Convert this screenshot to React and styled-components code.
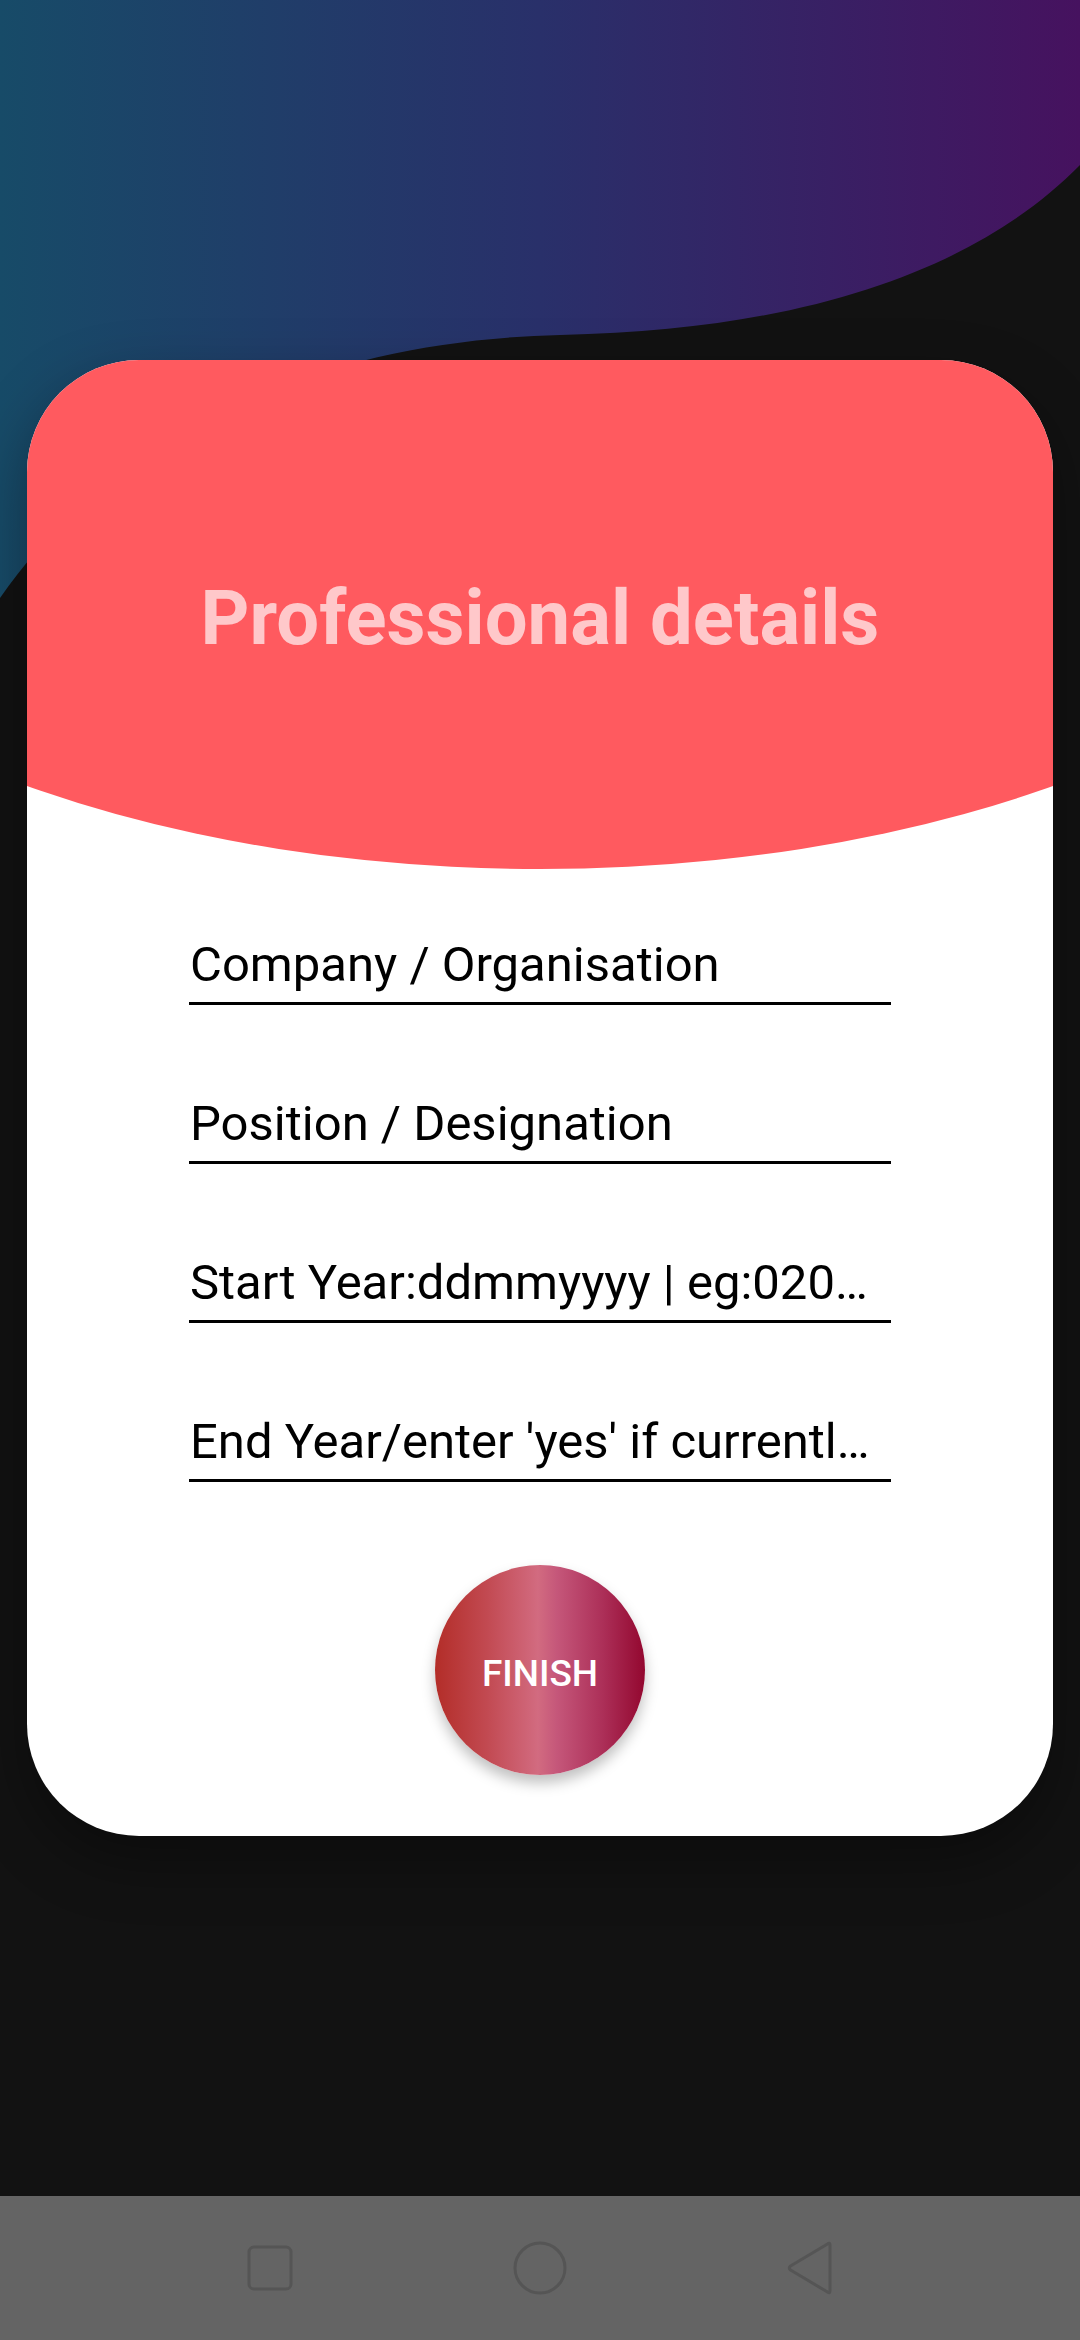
import React from 'react'
import styled, { createGlobalStyle } from 'styled-components'

const GlobalStyle = createGlobalStyle`
  html, body {
    margin: 0;
    padding: 0;
    background: #121212;
  }
  body {
    font-family: Roboto, "Noto Sans", sans-serif;
  }
  * {
    box-sizing: border-box;
  }
`

const fields = [
  'Company / Organisation',
  'Position / Designation',
  'Start Year:ddmmyyyy | eg:02072019',
  "End Year/enter 'yes' if currently working here",
]

function TopWave() {
  return (
    <Wave viewBox="0 0 1080 620" width="1080" height="620">
      <defs>
        <linearGradient id="waveFill" x1="0" y1="0" x2="1" y2="0">
          <stop offset="0" stopColor="#174b68" />
          <stop offset="0.5" stopColor="#29306a" />
          <stop offset="1" stopColor="#46125f" />
        </linearGradient>
      </defs>
      <path
        d="M0 0 H1080 V165 C985 262 820 330 560 335 C330 340 120 425 0 598 Z"
        fill="url(#waveFill)"
      />
    </Wave>
  )
}

function NavIcon({ kind }) {
  return (
    <svg width="60" height="60" viewBox="0 0 60 60" fill="none" stroke="#555" strokeWidth="3">
      {kind === 'square' && <rect x="9" y="9" width="42" height="42" rx="5" />}
      {kind === 'circle' && <circle cx="30" cy="30" r="25" />}
      {kind === 'back' && (
        <path d="M50 7 V53 Q50 56 47.5 54 L10.5 32 Q8 30 10.5 28 L47.5 6 Q50 4 50 7 Z" strokeLinejoin="round" />
      )}
    </svg>
  )
}

function App() {
  return (
    <>
      <GlobalStyle />
      <Screen>
        <TopWave />
        <Main>
          <Card>
            <Header>
              <Title>Professional details</Title>
            </Header>
            <Form>
              {fields.map((f) => (
                <Field key={f} placeholder={f} />
              ))}
              <FinishButton>FINISH</FinishButton>
            </Form>
          </Card>
        </Main>
        <NavBar>
          <NavSlot><NavIcon kind="square" /></NavSlot>
          <NavSlot><NavIcon kind="circle" /></NavSlot>
          <NavSlot><NavIcon kind="back" /></NavSlot>
        </NavBar>
      </Screen>
    </>
  )
}

export default App

const Screen = styled.div`
  position: relative;
  width: 1080px;
  height: 2340px;
  display: flex;
  flex-direction: column;
  background: #121212;
  overflow: hidden;
`

const Wave = styled.svg`
  position: absolute;
  top: 0;
  left: 0;
  display: block;
`

const Main = styled.main`
  position: relative;
  flex: 1;
  padding: 360px 27px 0;
`

const Card = styled.section`
  height: 1476px;
  background: #fff;
  border-radius: 112px;
  overflow: hidden;
  box-shadow: 0 24px 60px rgba(0, 0, 0, 0.35);
  display: flex;
  flex-direction: column;
`

const Header = styled.header`
  height: 509px;
  flex-shrink: 0;
  background: #ff5a5f;
  clip-path: ellipse(900px 465.5px at 50% 43.5px);
  display: flex;
  align-items: center;
  justify-content: center;
  padding-top: 8px;
`

const Title = styled.h1`
  margin: 0;
  font-family: Roboto, sans-serif;
  font-weight: 700;
  font-size: 76px;
  line-height: 1.172;
  color: #ffc8ca;
`

const Form = styled.form`
  width: 702px;
  margin: 0 auto;
  padding: 66px 0 61px;
  display: flex;
  flex-direction: column;
  align-items: stretch;
  gap: 89px;
`

const Field = styled.input`
  display: block;
  width: 100%;
  height: 70px;
  margin: 0;
  padding: 0 0 9px 1px;
  border: none;
  border-bottom: 3px solid #000;
  background: transparent;
  outline: none;
  font-family: Roboto, sans-serif;
  font-size: 49px;
  line-height: 58px;
  color: #000;
  text-overflow: ellipsis;
  white-space: nowrap;
  overflow: hidden;

  &::placeholder {
    color: #000;
    opacity: 1;
    text-overflow: ellipsis;
  }
`

const FinishButton = styled.button`
  align-self: center;
  margin-top: -6px;
  width: 210px;
  height: 210px;
  padding: 6px 0 0;
  border: none;
  border-radius: 50%;
  background: linear-gradient(
    90deg,
    #b32d28 0%,
    #c24a52 25%,
    #d26b80 49%,
    #c5577a 58%,
    #ac2f58 80%,
    #93072f 100%
  );
  box-shadow: 0 8px 14px rgba(0, 0, 0, 0.25);
  color: #fff;
  font-family: Roboto, sans-serif;
  font-weight: 500;
  font-size: 37px;
  letter-spacing: 0;
  cursor: pointer;
`

const NavBar = styled.nav`
  height: 144px;
  flex-shrink: 0;
  background: #646464;
  display: grid;
  grid-template-columns: repeat(3, 270px);
  justify-content: center;
  align-items: center;
`

const NavSlot = styled.div`
  display: flex;
  justify-content: center;
  align-items: center;
`
